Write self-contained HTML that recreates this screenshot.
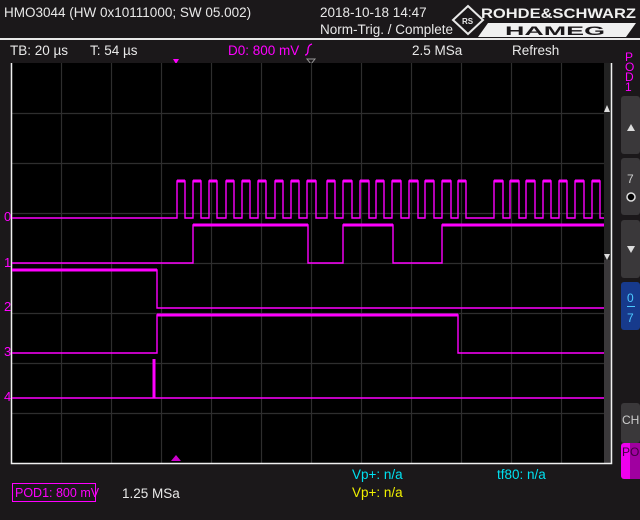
<!DOCTYPE html>
<html><head><meta charset="utf-8"><style>
html,body{margin:0;padding:0;background:#1b181a;width:640px;height:520px;overflow:hidden}
svg{display:block}
text{font-family:"Liberation Sans",sans-serif}
</style></head><body>
<svg width="640" height="520" viewBox="0 0 640 520" xmlns="http://www.w3.org/2000/svg">
<rect width="640" height="520" fill="#1b181a"/>
<g font-size="13.5" fill="#e8e8e8">
<text x="4" y="17">HMO3044 (HW 0x10111000; SW 05.002)</text>
<text x="320" y="17">2018-10-18 14:47</text>
<text x="320" y="34">Norm-Trig. / Complete</text>
</g>
<g transform="translate(468,20)">
<polygon points="-15,0 0,-14 15,0 0,14" fill="#1b181a" stroke="#e8e8e8" stroke-width="2"/>
<text x="-6" y="4" font-size="8" fill="#e8e8e8" font-weight="bold">RS</text>
</g>
<text x="481" y="18" font-size="14" font-weight="bold" fill="#f0f0f0" textLength="155" lengthAdjust="spacingAndGlyphs">ROHDE&amp;SCHWARZ</text>
<polygon points="488,23 636,23 626,37 478,37" fill="#f0f0f0"/>
<text x="505" y="35" font-size="12" font-weight="bold" fill="#1b181a" textLength="100" lengthAdjust="spacingAndGlyphs">HAMEG</text>
<rect x="0" y="38" width="640" height="2" fill="#e8e8e8"/>
<g font-size="13.5" fill="#e8e8e8">
<text x="10" y="55">TB: 20 µs</text>
<text x="90" y="55">T: 54 µs</text>
<text x="228" y="55" fill="#ff00ff">D0: 800 mV</text>
<text x="412" y="55">2.5 MSa</text>
<text x="512" y="55">Refresh</text>
</g>
<path d="M305 55Q308 55 308 50Q308 45 312 44" fill="none" stroke="#ff00ff" stroke-width="1.3"/>
<polygon points="173,59 179,59 176,64" fill="#ff00ff"/>
<polygon points="307,59 315,59 311,64" fill="none" stroke="#999" stroke-width="1"/>
<rect x="12" y="63" width="599" height="400" fill="#000"/>
<g stroke="#2e2e2e" stroke-width="1.2">
<path d="M61.5 63V463M111.5 63V463M161.5 63V463M211.5 63V463M261.5 63V463M311.5 63V463M361.5 63V463M411.5 63V463M461.5 63V463M511.5 63V463M561.5 63V463"/>
<path d="M12 113.5H604M12 163.5H604M12 213.5H604M12 263.5H604M12 313.5H604M12 363.5H604M12 413.5H604"/>
</g>
<rect x="604" y="63" width="7" height="197" fill="#222"/>
<rect x="604" y="260" width="7" height="203" fill="#3a383a"/>
<polygon points="604,112 610,112 607,105" fill="#ddd"/>
<polygon points="604,254 610,254 607,260" fill="#ddd"/>
<path d="M11.5 63V463.5H611.5V63" fill="none" stroke="#f0f0f0" stroke-width="1.5"/>
<g fill="none" stroke="#ff00ff" stroke-width="1.4">
<path d="M12 218H177V181H185V218H193V181H201V218H209V181H217V218H226V181H234V218H242V181H250V218H258V181H266V218H275V181H283V218H291V181H299V218H307V181H316V218H327V181H335V218H343V181H352V218H360V181H369V218H376V181H384V218H392V181H401V218H409V181H418V218H425V181H434V218H442V181H451V218H458V181H466V218H494V181H503V218H510V181H519V218H526V181H535V218H543V181H551V218H559V181H567V218H575V181H584V218H592V181H600V218H604"/>
<path d="M12 263H193V225H308V263H343V225H393V263H442V225H604"/>
<path d="M12 270H157V308H604"/>
<path d="M12 353H157V315H458V353H604"/>
<path d="M12 398H604"/>
</g>
<g fill="none" stroke="#ff00ff" stroke-width="3">
<path d="M177 181H185M193 181H201M209 181H217M226 181H234M242 181H250M258 181H266M275 181H283M291 181H299M307 181H316M327 181H335M343 181H352M360 181H369M376 181H384M392 181H401M409 181H418M425 181H434M442 181H451M458 181H466M494 181H503M510 181H519M526 181H535M543 181H551M559 181H567M575 181H584M592 181H600"/>
<path d="M193 225H308M343 225H393M442 225H604M12 270H157M157 315H458"/>
<path d="M154 359V398"/>
</g>
<g font-size="13" fill="#ff00ff">
<text x="4" y="221">0</text><text x="4" y="267">1</text><text x="4" y="311">2</text><text x="4" y="356">3</text><text x="4" y="401">4</text>
</g>
<polygon points="171,461 181,461 176,455" fill="#cc00cc"/>
<g font-size="12" fill="#ff00ff" font-family="Liberation Mono">
<text x="625" y="61">P</text><text x="625" y="71">O</text><text x="625" y="81">D</text><text x="625" y="91">1</text>
</g>
<rect x="621" y="96" width="19" height="58" rx="3" fill="#3a383a"/>
<polygon points="627,131 635,131 631,124" fill="#ddd"/>
<rect x="621" y="158" width="19" height="57" rx="3" fill="#3a383a"/>
<text x="627" y="183" font-size="12" fill="#ccc">7</text>
<circle cx="631" cy="197" r="4" fill="#000" stroke="#ddd" stroke-width="1.5"/>
<rect x="621" y="220" width="19" height="58" rx="3" fill="#3a383a"/>
<polygon points="627,246 635,246 631,253" fill="#ddd"/>
<rect x="621" y="282" width="19" height="48" rx="3" fill="#173a8c"/>
<text x="627" y="302" font-size="12" fill="#4cc8ff">0</text>
<rect x="627" y="306" width="8" height="1" fill="#4cc8ff"/>
<text x="627" y="322" font-size="12" fill="#4cc8ff">7</text>
<rect x="621" y="403" width="19" height="40" rx="3" fill="#3a383a"/>
<text x="622" y="424" font-size="12" fill="#ccc">CH</text>
<rect x="621" y="443" width="19" height="36" rx="3" fill="#ee00ee"/>
<rect x="630" y="443" width="10" height="36" fill="#a000a0"/>
<text x="622" y="456" font-size="12" fill="#400040">PO</text>
<g font-size="13.5">
<text x="352" y="479" fill="#00e0f0">Vp+: n/a</text>
<text x="497" y="479" fill="#00e0f0">tf80: n/a</text>
<text x="352" y="497" fill="#f0f000">Vp+: n/a</text>
<text x="122" y="498" fill="#e8e8e8">1.25 MSa</text>
</g>
<text x="15" y="497" font-size="12.5" fill="#ff00ff">POD1: 800 mV</text>
<rect x="12.5" y="483.5" width="83" height="18" fill="none" stroke="#ff00ff" stroke-width="1"/>
</svg>
</body></html>
